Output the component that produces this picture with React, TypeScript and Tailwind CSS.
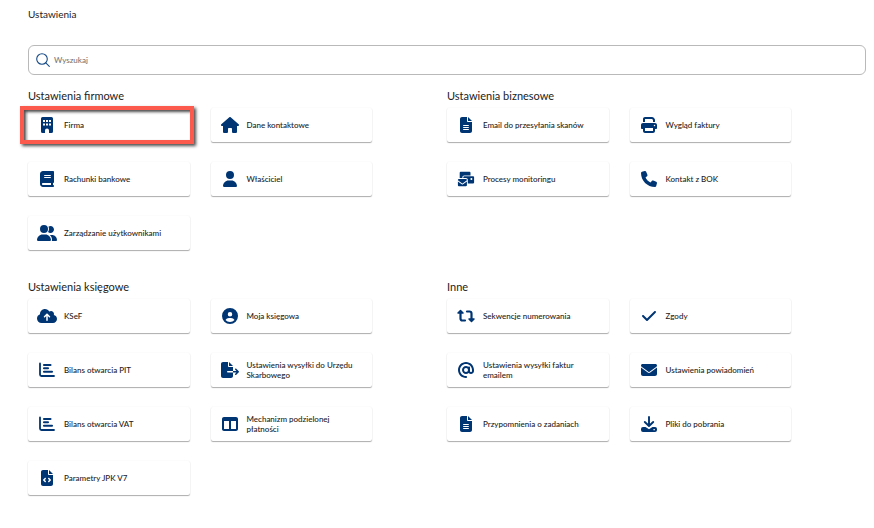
import type { IconType } from "react-icons";
import {
  FaAt, FaBook, FaCheck, FaCircleUser, FaCloudArrowUp, FaEnvelope,
  FaEnvelopesBulk, FaFileCode, FaFileExport, FaFileLines, FaHouse, FaPhone,
  FaPrint, FaTableColumns, FaUser, FaUserGroup,
} from "react-icons/fa6";

function IconBuilding({ className }: { className?: string }) {
  return (
    <svg viewBox="0 0 16 16" fill="currentColor" className={className} aria-hidden="true">
      <path fillRule="evenodd" d="M3.500 0H12.500Q14 0 14 1.500V14.500Q14 16 12.500 16H10V13.500Q10 11.500 8 11.500T6 13.500V16H3.500Q2 16 2 14.500V1.500Q2 0 3.500 0ZM4 3V5H6V3ZM7 3V5H9V3ZM10 3V5H12V3ZM4 6.500V8.500H6V6.500ZM7 6.500V8.500H9V6.500ZM10 6.500V8.500H12V6.500Z" />
    </svg>
  );
}

function IconBars({ className }: { className?: string }) {
  return (
    <svg viewBox="0 0 16 16" fill="none" stroke="currentColor" strokeLinecap="round" className={className} aria-hidden="true">
      <path d="M1 1.500V12.500Q1 14 2.500 14H15" strokeWidth="1.800" />
      <path d="M5 3H11.500M5 6.300H9M5 9.800H13" strokeWidth="2.100" />
    </svg>
  );
}

function IconDownload({ className }: { className?: string }) {
  return (
    <svg viewBox="0 0 16 16" fill="none" stroke="currentColor" className={className} aria-hidden="true">
      <path d="M8 1V9.500M3.800 6L8 10L12.200 6" strokeWidth="1.900" strokeLinecap="round" strokeLinejoin="round" />
      <path fillRule="evenodd" fill="currentColor" stroke="none" d="M2 11H4.500L8 13.200L11.500 11H14Q16 11.200 16 13V14Q16 16 14 16H2Q0 16 0 14V13Q0 11.200 2 11ZM12.500 13V14.200H13.800V13Z" />
    </svg>
  );
}

function IconSequence({ className }: { className?: string }) {
  return (
    <svg viewBox="0 0 18 14" fill="none" stroke="currentColor" strokeWidth="2.200" strokeLinecap="round" strokeLinejoin="round" className={className} aria-hidden="true">
      <path d="M3.500 3V9.500Q3.500 11.500 5.500 11.500H8M10 2.500H12.500Q14.500 2.500 14.500 4.500V11" />
      <path d="M1 4L3.500 1.500L6 4ZM12 10L14.500 12.500L17 10Z" fill="currentColor" strokeWidth="1.500" />
    </svg>
  );
}

type Icon = IconType | typeof IconBars;
type Item = { label: string; icon: Icon; size?: string; marked?: boolean };
type Section = { title: string; items: Item[] };

const sections: Section[] = [
  {
    title: "Ustawienia firmowe",
    items: [
      { label: "Firma", icon: IconBuilding, marked: true },
      { label: "Dane kontaktowe", icon: FaHouse, size: "size-[18px]" },
      { label: "Rachunki bankowe", icon: FaBook },
      { label: "Właściciel", icon: FaUser },
      { label: "Zarządzanie użytkownikami", icon: FaUserGroup, size: "size-5" },
    ],
  },
  {
    title: "Ustawienia biznesowe",
    items: [
      { label: "Email do przesyłania skanów", icon: FaFileLines },
      { label: "Wygląd faktury", icon: FaPrint },
      { label: "Procesy monitoringu", icon: FaEnvelopesBulk, size: "size-[18px]" },
      { label: "Kontakt z BOK", icon: FaPhone },
    ],
  },
  {
    title: "Ustawienia księgowe",
    items: [
      { label: "KSeF", icon: FaCloudArrowUp, size: "size-5" },
      { label: "Moja księgowa", icon: FaCircleUser },
      { label: "Bilans otwarcia PIT", icon: IconBars },
      { label: "Ustawienia wysyłki do Urzędu Skarbowego", icon: FaFileExport, size: "size-[18px]" },
      { label: "Bilans otwarcia VAT", icon: IconBars },
      { label: "Mechanizm podzielonej płatności", icon: FaTableColumns },
      { label: "Parametry JPK V7", icon: FaFileCode },
    ],
  },
  {
    title: "Inne",
    items: [
      { label: "Sekwencje numerowania", icon: IconSequence, size: "size-[18px]" },
      { label: "Zgody", icon: FaCheck },
      { label: "Ustawienia wysyłki faktur emailem", icon: FaAt },
      { label: "Ustawienia powiadomień", icon: FaEnvelope },
      { label: "Przypomnienia o zadaniach", icon: FaFileLines },
      { label: "Pliki do pobrania", icon: IconDownload },
    ],
  },
];

function Tile({ item }: { item: Item }) {
  const Glyph = item.icon;
  return (
    <button
      type="button"
      className="relative flex h-[34px] w-full items-center gap-[5px] rounded-xs bg-white pr-3 pl-[7px] text-left shadow-[0_1px_1px_rgba(0,0,0,0.32),0_0_2px_rgba(0,0,0,0.06)]"
    >
      <span className="flex w-6 shrink-0 justify-center text-[#003574]">
        <Glyph className={item.size ?? "size-4"} />
      </span>
      <span className="text-[8px] leading-[10px] font-medium">{item.label}</span>
      {item.marked && (
        <span className="pointer-events-none absolute -inset-x-2 -inset-y-0.5 -right-1 border-4 border-[#fb5a4d] shadow-[2px_2px_3px_rgba(0,0,0,0.7),inset_2px_2px_3px_rgba(0,0,0,0.7)]" />
      )}
    </button>
  );
}

export default function App() {
  return (
    <main className="min-h-screen bg-white pt-[6px] pr-2 pb-8 pl-7 font-['Lato','Liberation_Sans',sans-serif] text-[#222]">
      <h1 className="text-[10px] leading-4 font-normal">Ustawienia</h1>
      <label className="mt-[23px] flex h-[30px] items-center gap-1 rounded-md border border-[#b9b9b9] px-[7px]">
        <svg viewBox="0 0 14 14" className="size-[14px] shrink-0 text-[#174b86]" fill="none" stroke="currentColor" strokeWidth="1.100" strokeLinecap="round" aria-hidden="true">
          <circle cx="6" cy="6" r="5.300" />
          <path d="M9.800 9.800L13.300 13.300" />
        </svg>
        <input type="search" aria-label="Wyszukaj" placeholder="Wyszukaj" className="h-5 min-w-0 flex-1 bg-transparent text-[8px] leading-5 font-medium outline-none placeholder:text-[#777]" />
      </label>
      <div className="mt-[13px] grid grid-cols-2 gap-y-[29px]">
        {sections.map((section) => (
          <section key={section.title}>
            <h2 className="text-[11px] leading-4">{section.title}</h2>
            <div className="mt-1 mr-[75px] grid grid-cols-2 gap-x-[21px] gap-y-5">
              {section.items.map((item) => (
                <Tile key={item.label} item={item} />
              ))}
            </div>
          </section>
        ))}
      </div>
    </main>
  );
}
